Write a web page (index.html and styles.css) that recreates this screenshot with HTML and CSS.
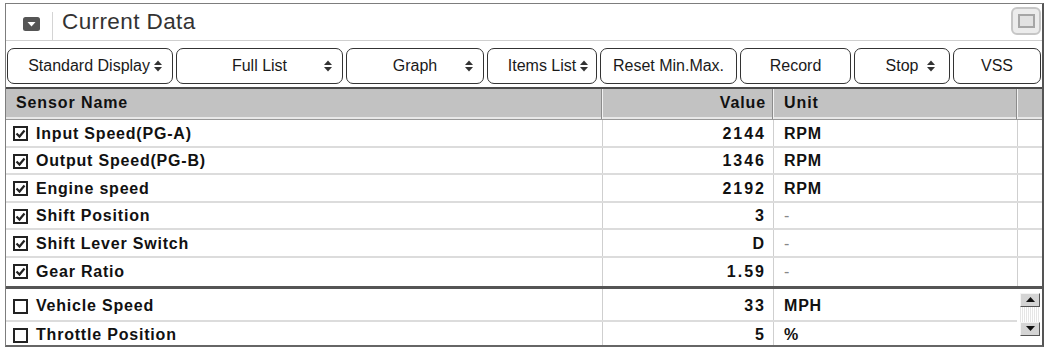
FILE: index.html
```html
<!DOCTYPE html>
<html lang="en">
<head>
    <meta charset="UTF-8"/>
    <title>Current Data</title>
    <link rel="stylesheet" href="styles.css">
</head>
<body>
    <div class="panel">
        <div class="titlebar">
            <span class="collapse">
                <svg width="17" height="14" viewBox="0 0 17 14"><rect x="0" y="0" width="17" height="14" rx="2.5" fill="#555"/><polygon points="4.5,5 12.5,5 8.5,9.5" fill="#fff"/></svg>
            </span>
            <span class="divider"></span>
            <span class="title">Current Data</span>
            <span class="maxbtn"><span class="maxbox"></span></span>
        </div>

        <div class="toolbar">
            <button class="btn w1"><span class="lbl">Standard Display</span><span class="spin"><svg width="8" height="12" viewBox="0 0 8 12"><polygon points="0,5 4,0.5 8,5" fill="#333"/><polygon points="0,7 8,7 4,11.5" fill="#333"/></svg></span></button>
            <button class="btn w2"><span class="lbl">Full List</span><span class="spin"><svg width="8" height="12" viewBox="0 0 8 12"><polygon points="0,5 4,0.5 8,5" fill="#333"/><polygon points="0,7 8,7 4,11.5" fill="#333"/></svg></span></button>
            <button class="btn w3"><span class="lbl">Graph</span><span class="spin"><svg width="8" height="12" viewBox="0 0 8 12"><polygon points="0,5 4,0.5 8,5" fill="#333"/><polygon points="0,7 8,7 4,11.5" fill="#333"/></svg></span></button>
            <button class="btn w4"><span class="lbl">Items List</span><span class="spin"><svg width="8" height="12" viewBox="0 0 8 12"><polygon points="0,5 4,0.5 8,5" fill="#333"/><polygon points="0,7 8,7 4,11.5" fill="#333"/></svg></span></button>
            <button class="btn w5 plain">Reset Min.Max.</button>
            <button class="btn w6 plain">Record</button>
            <button class="btn w7"><span class="lbl">Stop</span><span class="spin"><svg width="8" height="12" viewBox="0 0 8 12"><polygon points="0,5 4,0.5 8,5" fill="#333"/><polygon points="0,7 8,7 4,11.5" fill="#333"/></svg></span></button>
            <button class="btn w8 plain">VSS</button>
        </div>

        <div class="grid">
            <div class="row head">
                <div class="cell name">Sensor Name</div>
                <div class="cell val">Value</div>
                <div class="cell unit">Unit</div>
                <div class="cell end"></div>
            </div>
            <div class="row">
                <div class="cell name"><span class="cb"><svg width="11" height="11" viewBox="0 0 11 11"><polyline points="1.5,5.5 4.5,8.5 9.5,2.5" fill="none" stroke="#222" stroke-width="2.2"/></svg></span>Input Speed(PG-A)</div>
                <div class="cell val">2144</div>
                <div class="cell unit">RPM</div>
                <div class="cell end"></div>
            </div>
            <div class="row">
                <div class="cell name"><span class="cb"><svg width="11" height="11" viewBox="0 0 11 11"><polyline points="1.5,5.5 4.5,8.5 9.5,2.5" fill="none" stroke="#222" stroke-width="2.2"/></svg></span>Output Speed(PG-B)</div>
                <div class="cell val">1346</div>
                <div class="cell unit">RPM</div>
                <div class="cell end"></div>
            </div>
            <div class="row">
                <div class="cell name"><span class="cb"><svg width="11" height="11" viewBox="0 0 11 11"><polyline points="1.5,5.5 4.5,8.5 9.5,2.5" fill="none" stroke="#222" stroke-width="2.2"/></svg></span>Engine speed</div>
                <div class="cell val">2192</div>
                <div class="cell unit">RPM</div>
                <div class="cell end"></div>
            </div>
            <div class="row">
                <div class="cell name"><span class="cb"><svg width="11" height="11" viewBox="0 0 11 11"><polyline points="1.5,5.5 4.5,8.5 9.5,2.5" fill="none" stroke="#222" stroke-width="2.2"/></svg></span>Shift Position</div>
                <div class="cell val">3</div>
                <div class="cell unit dash">-</div>
                <div class="cell end"></div>
            </div>
            <div class="row">
                <div class="cell name"><span class="cb"><svg width="11" height="11" viewBox="0 0 11 11"><polyline points="1.5,5.5 4.5,8.5 9.5,2.5" fill="none" stroke="#222" stroke-width="2.2"/></svg></span>Shift Lever Switch</div>
                <div class="cell val">D</div>
                <div class="cell unit dash">-</div>
                <div class="cell end"></div>
            </div>
            <div class="row last">
                <div class="cell name"><span class="cb"><svg width="11" height="11" viewBox="0 0 11 11"><polyline points="1.5,5.5 4.5,8.5 9.5,2.5" fill="none" stroke="#222" stroke-width="2.2"/></svg></span>Gear Ratio</div>
                <div class="cell val">1.59</div>
                <div class="cell unit dash">-</div>
                <div class="cell end"></div>
            </div>
        </div>

        <div class="pane">
            <div class="prows">
                <div class="row">
                    <div class="cell name"><span class="cb"></span>Vehicle Speed</div>
                    <div class="cell val">33</div>
                    <div class="cell unit">MPH</div>
                </div>
                <div class="row">
                    <div class="cell name"><span class="cb"></span>Throttle Position</div>
                    <div class="cell val">5</div>
                    <div class="cell unit">%</div>
                </div>
            </div>
            <div class="scroll">
                <span class="sbtn"><svg width="9" height="5" viewBox="0 0 9 5"><polygon points="0,5 4.5,0 9,5" fill="#111"/></svg></span>
                <span class="track"></span>
                <span class="sbtn"><svg width="9" height="5" viewBox="0 0 9 5"><polygon points="0,0 9,0 4.5,5" fill="#111"/></svg></span>
            </div>
        </div>
    </div>
</body>
</html>
```

FILE: styles.css
```css
body {
    margin: 0;
    padding: 0;
    background: #fff;
    font-family: "Liberation Sans", Arial, sans-serif;
    color: #111;
}
.panel {
    margin: 3px 0 0 5px;
    width: 1039px;
    height: 344px;
    box-sizing: border-box;
    border: 1px solid #7d7d7d;
    border-right: 2px solid #555;
    border-bottom: 2px solid #666;
    overflow: hidden;
}

/* title bar */
.titlebar {
    display: flex;
    align-items: center;
    height: 36px;
    border-bottom: 1px solid #cfcfcf;
}
.collapse {
    display: flex;
    margin: 4px 0 0 17px;
}
.divider {
    align-self: flex-end;
    width: 1px;
    height: 28px;
    margin-left: 12px;
    background: #d4d4d4;
}
.title {
    margin-left: 9px;
    font-size: 22.5px;
    letter-spacing: 0.4px;
    color: #333;
}
.maxbtn {
    display: flex;
    align-items: center;
    justify-content: center;
    margin: -2px 1px 0 auto;
    width: 30px;
    height: 28px;
    box-sizing: border-box;
    border: 2px solid #c6c6c6;
    border-radius: 6px;
    background: #ececec;
}
.maxbox {
    width: 17px;
    height: 14px;
    box-sizing: border-box;
    border: 2px solid #a6a6a6;
    background: #e2e2e2;
}

/* buttons */
.toolbar {
    display: flex;
    gap: 3px;
    padding: 7px 0 3px 1px;
}
.btn {
    display: grid;
    grid-template-columns: 1fr auto 1fr;
    align-items: center;
    height: 36px;
    padding: 0;
    border: 1px solid #333;
    border-radius: 7px;
    background: #fff;
    font-family: "Liberation Sans", Arial, sans-serif;
    font-size: 16px;
    color: #1a1a1a;
}
.btn .lbl {
    grid-column: 2;
    white-space: nowrap;
}
.btn .spin {
    grid-column: 3;
    justify-self: end;
    display: flex;
    margin: 0 10px 0 4px;
}
.btn.plain {
    display: block;
    text-align: center;
}
.w1 { width: 166px; }
.w2 { width: 167px; }
.w3 { width: 138px; }
.w4 { width: 110px; }
.w5 { width: 137px; }
.w6 { width: 111px; }
.w7 { width: 96px; }
.w8 { width: 88px; }
.w1 .lbl { margin-left: 4px; }
.w4 .spin { margin-right: 8px; margin-left: 2px; }
.w7 .spin { margin-right: 14px; }

/* table */
.grid {
    border-top: 2px solid #4a4a4a;
}
.row {
    display: grid;
    grid-template-columns: 596px 171px 244px 26px;
    height: 27.5px;
    box-sizing: border-box;
    border-bottom: 2px solid #dcdcdc;
    font-size: 16px;
    font-weight: bold;
    letter-spacing: 0.8px;
}
.cell {
    display: flex;
    align-items: center;
    padding-top: 2px;
    white-space: nowrap;
    overflow: hidden;
}
.row .cell + .cell {
    border-left: 1px solid #cfcfcf;
}
.name {
    padding-left: 7px;
}
.val {
    justify-content: flex-end;
    padding-right: 7px;
    letter-spacing: 2px;
}
.unit {
    padding-left: 10px;
}
.dash {
    color: #888;
    font-weight: normal;
}
.row.head {
    height: 31px;
    background: #c2c2c2;
    border-bottom: 1px solid #999;
    box-shadow: inset 0 -2px 0 #e8e8e8;
    letter-spacing: 0.9px;
}
.row.head .cell {
    padding-top: 0;
    padding-bottom: 2px;
    border-right: 1px solid #8c8c8c;
}
.row.head .name {
    padding-left: 10px;
}
.row.head .val {
    letter-spacing: 0.9px;
    padding-right: 6px;
}
.row.head .cell + .cell {
    border-left: 1px solid #f2f2f2;
}
.row.head .cell.end {
    border-right: none;
}
.row.last {
    height: 31px;
    border-bottom: 3px solid #555;
}
.row.last .cell {
    padding-top: 0;
}

.cb {
    display: flex;
    align-items: center;
    justify-content: center;
    width: 15px;
    height: 15px;
    box-sizing: border-box;
    border: 2px solid #222;
    margin-right: 8px;
    flex: none;
}

/* lower pane */
.pane {
    display: flex;
    height: 56px;
}
.prows {
    width: 1011px;
}
.prows .row {
    grid-template-columns: 596px 171px 244px;
    height: 33px;
}
.prows .row .cell {
    padding-top: 4px;
}
.prows .row + .row {
    height: 27px;
    border-bottom: none;
}
.prows .row + .row .cell {
    padding-top: 0;
}
.scroll {
    display: flex;
    flex-direction: column;
    padding: 4px 2px 0 3px;
    width: 26px;
    box-sizing: border-box;
}
.sbtn {
    display: flex;
    align-items: center;
    justify-content: center;
    height: 14px;
    box-sizing: border-box;
    background: #d4d4d4;
    border: 1px solid;
    border-color: #f4f4f4 #555 #555 #f4f4f4;
}
.track {
    height: 15px;
    background: repeating-linear-gradient(90deg, #e6e6e6 0 1px, #fff 1px 2px);
}
```
